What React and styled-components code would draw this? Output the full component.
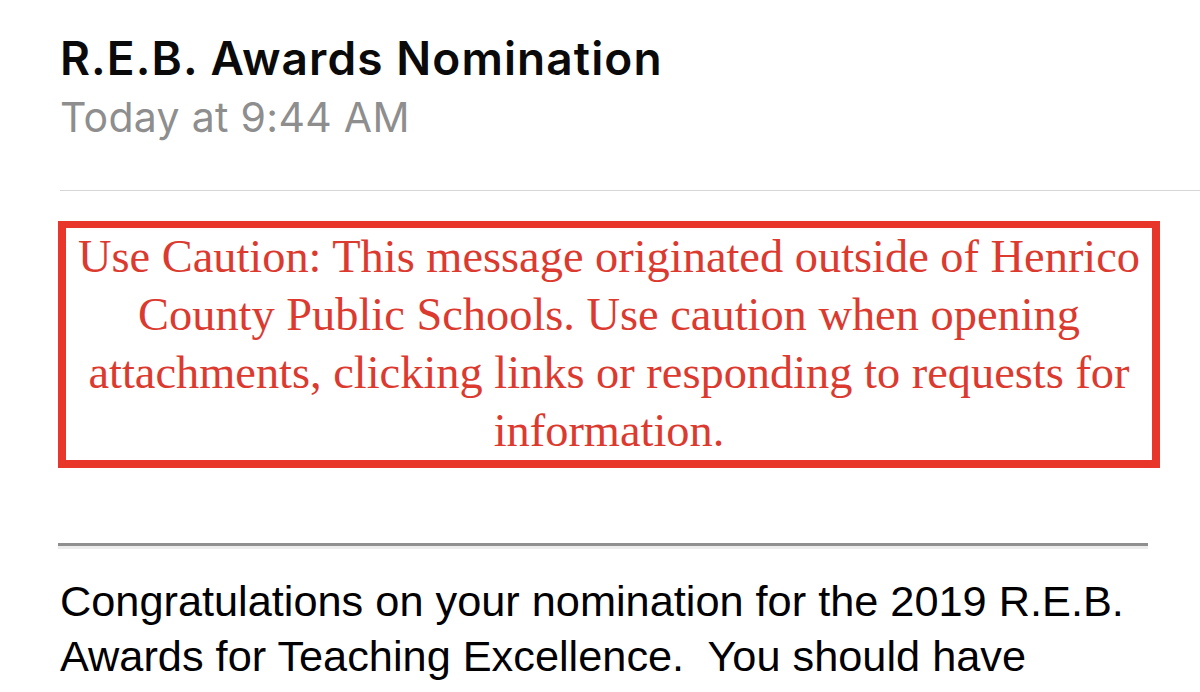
import React from "react";
import styled, { createGlobalStyle } from "styled-components";

const Global = createGlobalStyle`
  html, body { margin: 0; padding: 0; background: #ffffff; }
  body { width: 1200px; height: 692px; overflow: hidden; }
`;

const Page = styled.div`
  width: 1200px;
  height: 692px;
  background: #fff;
  display: flex;
  flex-direction: column;
`;

const Header = styled.header`
  padding: 30px 0 0 60px;
  display: flex;
  flex-direction: column;
  gap: 6px;
`;

const Title = styled.h1`
  margin: 0;
  font-family: Inter, "Noto Sans", sans-serif;
  font-weight: 600;
  font-size: 46px;
  line-height: 56px;
  color: #0a0a0a;
  letter-spacing: 1.1px;
`;

const DateLine = styled.div`
  font-family: Inter, "Noto Sans", sans-serif;
  font-weight: 400;
  font-size: 41px;
  line-height: 50px;
  color: #8e8e8e;
  letter-spacing: 0.3px;
`;

const Rule = styled.hr`
  margin: ${(p) => p.$m};
  border: none;
  height: ${(p) => p.$h}px;
  background: ${(p) => p.$c};
  box-shadow: ${(p) => p.$shadow || "none"};
  flex-shrink: 0;
`;

const Caution = styled.div`
  margin: 30px 40px 0 58px;
  border: 8px solid #e8372a;
  border-top-width: 7px;
  height: 232px;
  display: flex;
  flex-direction: column;
  font-family: "Liberation Serif", "Times New Roman", serif;
  font-size: 46.4px;
  line-height: 58px;
  color: #dc3a2f;
  text-align: center;
`;

const CautionLine = styled.span`
  display: block;
  white-space: nowrap;
`;

const Body = styled.p`
  margin: 28px 0 0 60px;
  width: 1100px;
  font-family: "Liberation Sans", Arial, Helvetica, sans-serif;
  font-size: 43.3px;
  line-height: 55px;
  color: #000;
  white-space: pre-wrap;
`;

const cautionLines = [
  "Use Caution: This message originated outside of Henrico",
  "County Public Schools. Use caution when opening",
  "attachments, clicking links or responding to requests for",
  "information.",
];

export default function App() {
  return (
    <Page>
      <Global />
      <Header>
        <Title>R.E.B. Awards Nomination</Title>
        <DateLine>Today at 9:44 AM</DateLine>
      </Header>
      <Rule $m="48px 0 0 60px" $h={1} $c="#d6d6d6" />
      <Caution>
        {cautionLines.map((l) => (
          <CautionLine key={l}>{l}</CautionLine>
        ))}
      </Caution>
      <Rule $m="75px 52px 0 58px" $h={3} $c="#8f8f8f" $shadow="0 3px 0 #ececec" />
      <Body>
        {"Congratulations on your nomination for the 2019 R.E.B. Awards for Teaching Excellence.  You should have"}
      </Body>
    </Page>
  );
}
